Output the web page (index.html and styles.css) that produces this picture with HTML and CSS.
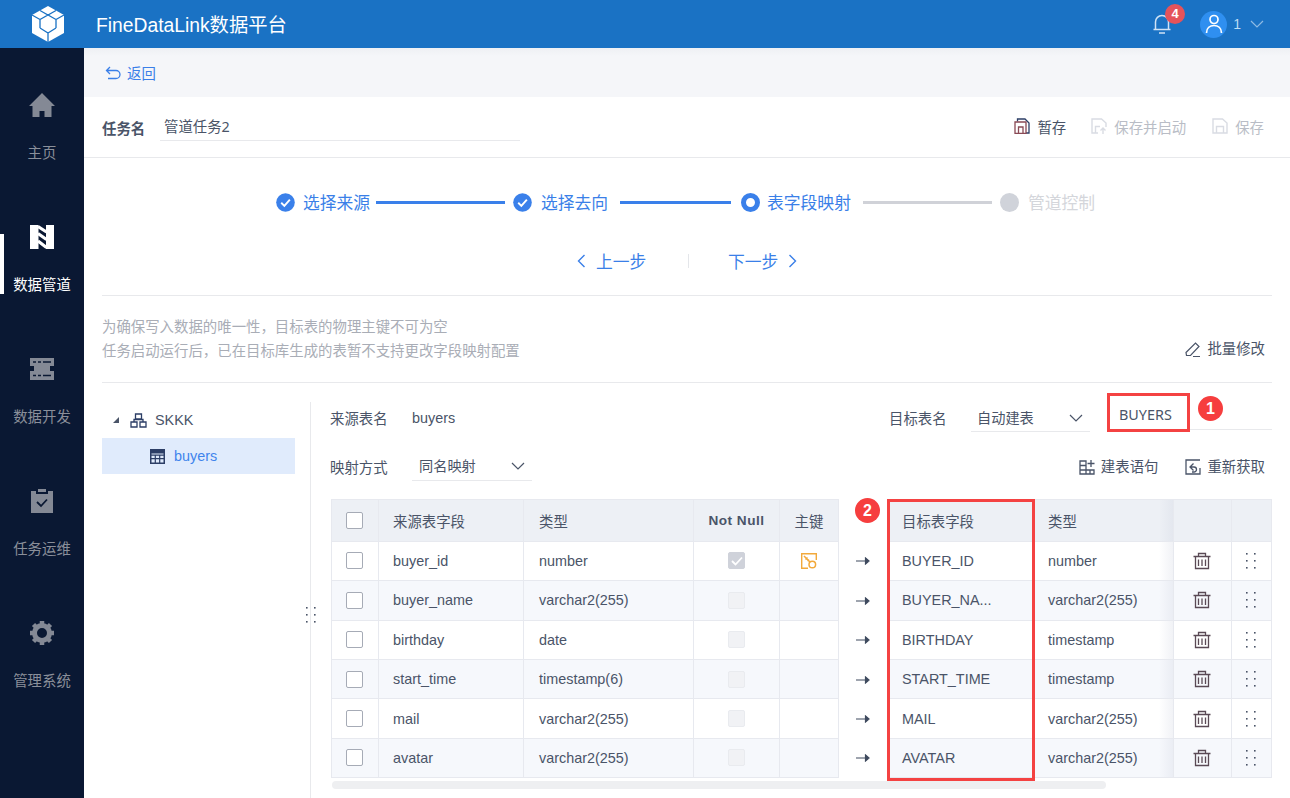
FILE: index.html
```html
<!DOCTYPE html>
<html lang="zh">
<head>
<meta charset="utf-8">
<title>FineDataLink数据平台</title>
<link rel="stylesheet" href="styles.css">
</head>
<body>
<svg class="defs" width="0" height="0" aria-hidden="true">
  <symbol id="i-trash" viewBox="0 0 18 18"><path d="M.5 4.500h17M5.500 4.500V1.500h7v3M2.500 4.500v12h13v-12M5.500 7.500v6.500M9 7.500v6.500M12.500 7.500v6.500M2.500 16.500h13" fill="none" stroke="currentColor" stroke-width="1.300"/></symbol>
  <symbol id="i-dots" viewBox="0 0 12 18"><g fill="currentColor"><rect x="1" y="1" width="1.600" height="1.600"/><rect x="9" y="1" width="1.600" height="1.600"/><rect x="1" y="8" width="1.600" height="1.600"/><rect x="9" y="8" width="1.600" height="1.600"/><rect x="1" y="15" width="1.600" height="1.600"/><rect x="9" y="15" width="1.600" height="1.600"/></g></symbol>
  <symbol id="i-arrow" viewBox="0 0 14 8"><path d="M0 4h12M9.500 1 13 4 9.500 7z" fill="currentColor" stroke="currentColor" stroke-width="1.200"/></symbol>
  <symbol id="i-check" viewBox="0 0 20 20"><circle cx="10" cy="10" r="9.800" fill="currentColor"/><path d="M5.500 10.300 8.800 13.600 14.600 7" fill="none" stroke="#fff" stroke-width="2"/></symbol>
  <symbol id="i-chev" viewBox="0 0 14 8"><path d="M1 1l6 6 6-6" fill="none" stroke="currentColor" stroke-width="1.200"/></symbol>
</svg>

<header class="topbar">
  <div class="logo-wrap">
    <svg class="logo" width="34" height="38" viewBox="0 0 34 38">
      <path d="M17 1l16 9v18l-16 9-16-9V10z" fill="#fff"/>
      <path d="M9 5.500l8 4.500 8-4.500M9 14.500 17 10l8 4.500M9 14.500V23M25 14.500V23M9 23l8 5 8-5M1 10l8 4.500M33 10l-8 4.500M17 28v9" fill="none" stroke="#1a72c4" stroke-width="1.300"/>
    </svg>
  </div>
  <div class="brand">FineDataLink数据平台</div>
  <div class="top-right">
    <div class="bell">
      <svg width="20" height="22" viewBox="0 0 20 22"><path d="M3.500 16V9a6.500 6.500 0 0 1 13 0v7M1.500 16.500h17M7 20h6" fill="none" stroke="#cfe2f5" stroke-width="1.500"/></svg>
      <span class="badge">4</span>
    </div>
    <div class="avatar">
      <svg width="18" height="20" viewBox="0 0 18 20"><circle cx="9" cy="5.500" r="4" fill="none" stroke="#fff" stroke-width="1.700"/><path d="M1.500 19c0-5 3.500-7.500 7.500-7.500s7.500 2.500 7.500 7.500" fill="none" stroke="#fff" stroke-width="1.700"/></svg>
    </div>
    <span class="user">1</span>
    <svg class="user-chev" width="14" height="8"><use href="#i-chev"/></svg>
  </div>
</header>

<div class="shell">
  <nav class="sidebar">
    <a class="nav-item">
      <svg width="26" height="26" viewBox="0 0 26 26"><path d="M13 1 26 14h-3.500v11H15.500v-6h-5v6H3.500V14H0z" fill="currentColor"/></svg>
      <span>主页</span>
    </a>
    <a class="nav-item active">
      <svg width="26" height="26" viewBox="0 0 26 26"><path d="M1 1h8.500v24H1zM17 1h8v24h-8z" fill="#fff"/><path d="M9 2.500l8.500 5.500M9 9.500l8.500 6M9 17l8.500 6.500" fill="none" stroke="#fff" stroke-width="3.200"/></svg>
      <span>数据管道</span>
    </a>
    <a class="nav-item">
      <svg width="26" height="26" viewBox="0 0 26 24"><path d="M1 1h24v8H1zM5 9h16v5H5zM1 14h24v9H1z" fill="currentColor"/><path d="M4 5h3M9 5h3M14 5h8M4 18.500h3M9 18.500h3M14 18.500h8M1 11.500h3M22 11.500h3" stroke="#0a1833" stroke-width="1.300"/></svg>
      <span>数据开发</span>
    </a>
    <a class="nav-item">
      <svg width="26" height="26" viewBox="0 0 24 26"><path d="M1 3h5v3h12V3h5v22H1zM8 1h8v3H8z" fill="currentColor"/><path d="M7 14l4 4 6-6.500" fill="none" stroke="#0a1833" stroke-width="1.800"/></svg>
      <span>任务运维</span>
    </a>
    <a class="nav-item">
      <svg width="26" height="26" viewBox="0 0 26 26"><circle cx="13" cy="13" r="7.500" fill="none" stroke="currentColor" stroke-width="5"/><path d="M13 1v4M13 21v4M1 13h4M21 13h4M4.500 4.500l3 3M18.500 18.500l3 3M21.500 4.500l-3 3M7.500 18.500l-3 3" stroke="currentColor" stroke-width="4.500"/></svg>
      <span>管理系统</span>
    </a>
  </nav>

  <main class="main">
    <div class="backbar">
      <svg width="16" height="14" viewBox="0 0 16 14"><path d="M5 1 1.500 4.500 5 8M1.500 4.500H11a3.800 3.800 0 0 1 0 8H3" fill="none" stroke="#3a7fe8" stroke-width="1.300"/></svg>
      <span>返回</span>
    </div>

    <div class="taskrow">
      <label class="task-label">任务名</label>
      <div class="task-input">管道任务2</div>
      <div class="actions">
        <span class="action"><svg width="16" height="16" viewBox="0 0 16 16"><path d="M3.500 3.500V1H11l4 4v10h-3" fill="none" stroke="#2c3e66" stroke-width="1.300"/><path d="M1 4h11v11.300H1zM4.500 15V9h4.500v6" fill="none" stroke="#8a4a55" stroke-width="1.300"/></svg>暂存</span>
        <span class="action off start"><svg width="16" height="16" viewBox="0 0 16 16"><path d="M7 15H1V1h9.500L15 5v4M4.500 15V8.500H9" fill="none" stroke="currentColor" stroke-width="1.400"/><path d="M12 16v-5.500M9.500 12.500l2.500-2.500 2.500 2.500" fill="none" stroke="currentColor" stroke-width="1.400"/></svg>保存并启动</span>
        <span class="action off last"><svg width="16" height="16" viewBox="0 0 16 16"><path d="M1 15V1h9.500L15 5v10zM4.500 15V8.500h7V15" fill="none" stroke="currentColor" stroke-width="1.400"/></svg>保存</span>
      </div>
    </div>

    <div class="content">
      <div class="steps">
        <svg class="dot" width="19" height="19"><use href="#i-check"/></svg>
        <span class="step-text st1">选择来源</span>
        <i class="line l1"></i>
        <svg class="dot d2" width="19" height="19"><use href="#i-check"/></svg>
        <span class="step-text st2">选择去向</span>
        <i class="line l2"></i>
        <span class="dot-now"></span>
        <span class="step-text st3">表字段映射</span>
        <i class="line l3"></i>
        <span class="dot-off"></span>
        <span class="step-text st4">管道控制</span>
      </div>

      <div class="pager">
        <span class="page-btn"><svg width="9" height="14" viewBox="0 0 9 14"><path d="M7.500 1 1.500 7l6 6" fill="none" stroke="currentColor" stroke-width="1.400"/></svg>上一步</span>
        <i class="page-sep"></i>
        <span class="page-btn"><span>下一步</span><svg width="9" height="14" viewBox="0 0 9 14"><path d="M1.500 1l6 6-6 6" fill="none" stroke="currentColor" stroke-width="1.400"/></svg></span>
      </div>

      <div class="hints">
        <div class="hint-text">
          <p>为确保写入数据的唯一性，目标表的物理主键不可为空</p>
          <p>任务启动运行后，已在目标库生成的表暂不支持更改字段映射配置</p>
        </div>
        <span class="tool"><svg width="16" height="16" viewBox="0 0 16 16"><path d="M1 11.500 10.500 2 14 5.500 5.500 14.500H1.500zM8 15.500h7" fill="none" stroke="#4a5468" stroke-width="1.200"/></svg>批量修改</span>
      </div>

      <div class="workspace">
        <aside class="tree">
          <div class="tree-root">
            <i class="caret"></i>
            <svg width="17" height="15" viewBox="0 0 17 15"><path d="M5.500 1h6v5h-6zM1 9h6v5H1zM10 9h6v5h-6zM4 9V6.500h9V9" fill="none" stroke="#2c3e66" stroke-width="1.300"/></svg>
            <span>SKKK</span>
          </div>
          <div class="tree-leaf">
            <svg width="15" height="15" viewBox="0 0 15 15"><path d="M0 0h15v15H0z" fill="#2c3e66"/><path d="M1.500 4.500h12v1h-12zM1.500 6.800h3.200v2.200H1.500zM5.900 6.800h3.200v2.200H5.900zM10.300 6.800h3.200v2.200h-3.200zM1.500 10.300h3.200v3.200H1.500zM5.900 10.300h3.200v3.200H5.900zM10.300 10.300h3.200v3.200h-3.200z" fill="#e0ebfc"/></svg>
            <span>buyers</span>
          </div>
          <svg class="resize" width="12" height="18"><use href="#i-dots"/></svg>
        </aside>

        <section class="mapping">
          <div class="form-row first">
            <span class="f-label">来源表名</span>
            <span class="f-value">buyers</span>
            <span class="f-label target">目标表名</span>
            <div class="select sel-target"><span>自动建表</span><svg width="14" height="8"><use href="#i-chev"/></svg></div>
            <div class="name-input">BUYERS</div>
            <span class="red-box"></span>
            <span class="mark mark1">1</span>
          </div>
          <div class="form-row second">
            <span class="f-label">映射方式</span>
            <div class="select sel-map"><span>同名映射</span><svg width="14" height="8"><use href="#i-chev"/></svg></div>
            <span class="tool push"><svg width="16" height="16" viewBox="0 0 16 16"><path d="M1 2h6v13H1zM1 6.500h6M1 11h6M7 11h8v4H7zM11 11v4M12 1v7M8.500 4.500h7" fill="none" stroke="#4a5468" stroke-width="1.300"/></svg>建表语句</span>
            <span class="tool gap"><svg width="16" height="16" viewBox="0 0 16 16"><path d="M15 1H1v14h14V9M8.500 4.500 5 8l3.500 3.500M5 8h4a2.500 2.500 0 0 1 0 5H7" fill="none" stroke="#4a5468" stroke-width="1.300"/></svg>重新获取</span>
          </div>

          <div class="table">
            <div class="row head">
              <div class="c c-ck"><i class="ck"></i></div>
              <div class="c">来源表字段</div>
              <div class="c">类型</div>
              <div class="c c-mid notnull">Not Null</div>
              <div class="c c-mid">主键</div>
              <div class="c c-arrow"></div>
              <div class="c">目标表字段</div>
              <div class="c c-shade">类型</div>
              <div class="c"></div>
              <div class="c c-last"></div>
            </div>

            <div class="row">
              <div class="c c-ck"><i class="ck"></i></div>
              <div class="c">buyer_id</div><div class="c">number</div>
              <div class="c c-mid"><i class="nn nn-on"><svg width="12" height="10" viewBox="0 0 12 10"><path d="M1 5l3.500 3.500L11 1.500" fill="none" stroke="#fff" stroke-width="1.800"/></svg></i></div>
              <div class="c c-mid"><svg width="16" height="16" viewBox="0 0 16 16"><path d="M15.300 7V.7H.7v14.600H7" fill="none" stroke="#f2a93b" stroke-width="1.400"/><circle cx="11.300" cy="11.500" r="3.300" fill="none" stroke="#f2a93b" stroke-width="1.500"/><path d="M3 3l6 6M4.500 6.500l2-2M6.500 8l1.500-1.500" fill="none" stroke="#f2a93b" stroke-width="1.500"/></svg></div>
              <div class="c c-arrow"><svg width="14" height="8"><use href="#i-arrow"/></svg></div>
              <div class="c">BUYER_ID</div><div class="c c-shade">number</div>
              <div class="c c-mid c-op"><svg width="18" height="18"><use href="#i-trash"/></svg></div>
              <div class="c c-mid c-op c-last"><svg class="drag" width="12" height="18"><use href="#i-dots"/></svg></div>
            </div>

            <div class="row alt">
              <div class="c c-ck"><i class="ck"></i></div>
              <div class="c">buyer_name</div><div class="c">varchar2(255)</div>
              <div class="c c-mid"><i class="nn"></i></div><div class="c c-mid"></div>
              <div class="c c-arrow"><svg width="14" height="8"><use href="#i-arrow"/></svg></div>
              <div class="c">BUYER_NA...</div><div class="c c-shade">varchar2(255)</div>
              <div class="c c-mid c-op"><svg width="18" height="18"><use href="#i-trash"/></svg></div>
              <div class="c c-mid c-op c-last"><svg class="drag" width="12" height="18"><use href="#i-dots"/></svg></div>
            </div>

            <div class="row">
              <div class="c c-ck"><i class="ck"></i></div>
              <div class="c">birthday</div><div class="c">date</div>
              <div class="c c-mid"><i class="nn"></i></div><div class="c c-mid"></div>
              <div class="c c-arrow"><svg width="14" height="8"><use href="#i-arrow"/></svg></div>
              <div class="c">BIRTHDAY</div><div class="c c-shade">timestamp</div>
              <div class="c c-mid c-op"><svg width="18" height="18"><use href="#i-trash"/></svg></div>
              <div class="c c-mid c-op c-last"><svg class="drag" width="12" height="18"><use href="#i-dots"/></svg></div>
            </div>

            <div class="row alt">
              <div class="c c-ck"><i class="ck"></i></div>
              <div class="c">start_time</div><div class="c">timestamp(6)</div>
              <div class="c c-mid"><i class="nn"></i></div><div class="c c-mid"></div>
              <div class="c c-arrow"><svg width="14" height="8"><use href="#i-arrow"/></svg></div>
              <div class="c">START_TIME</div><div class="c c-shade">timestamp</div>
              <div class="c c-mid c-op"><svg width="18" height="18"><use href="#i-trash"/></svg></div>
              <div class="c c-mid c-op c-last"><svg class="drag" width="12" height="18"><use href="#i-dots"/></svg></div>
            </div>

            <div class="row">
              <div class="c c-ck"><i class="ck"></i></div>
              <div class="c">mail</div><div class="c">varchar2(255)</div>
              <div class="c c-mid"><i class="nn"></i></div><div class="c c-mid"></div>
              <div class="c c-arrow"><svg width="14" height="8"><use href="#i-arrow"/></svg></div>
              <div class="c">MAIL</div><div class="c c-shade">varchar2(255)</div>
              <div class="c c-mid c-op"><svg width="18" height="18"><use href="#i-trash"/></svg></div>
              <div class="c c-mid c-op c-last"><svg class="drag" width="12" height="18"><use href="#i-dots"/></svg></div>
            </div>

            <div class="row alt">
              <div class="c c-ck"><i class="ck"></i></div>
              <div class="c">avatar</div><div class="c">varchar2(255)</div>
              <div class="c c-mid"><i class="nn"></i></div><div class="c c-mid"></div>
              <div class="c c-arrow"><svg width="14" height="8"><use href="#i-arrow"/></svg></div>
              <div class="c">AVATAR</div><div class="c c-shade">varchar2(255)</div>
              <div class="c c-mid c-op"><svg width="18" height="18"><use href="#i-trash"/></svg></div>
              <div class="c c-mid c-op c-last"><svg class="drag" width="12" height="18"><use href="#i-dots"/></svg></div>
            </div>

            <span class="col-box"></span>
            <span class="mark mark2">2</span>
          </div>
          <div class="hscroll"><i></i></div>
        </section>
      </div>
    </div>
  </main>
</div>
</body>
</html>
```

FILE: styles.css
```css
* { box-sizing: border-box; }
html, body { margin: 0; height: 100%; }
body {
  width: 1290px;
  height: 798px;
  overflow: hidden;
  display: flex;
  flex-direction: column;
  font-family: "Liberation Sans", "Noto Sans CJK SC", sans-serif;
  font-size: 14.4px;
  color: #4a5468;
  background: #fff;
}
p { margin: 0; }
i { display: block; font-style: normal; }
svg { display: block; flex: none; }
.defs { position: absolute; }

/* top bar */
.topbar {
  height: 48px;
  flex: none;
  display: flex;
  align-items: center;
  background: #1a72c4;
  color: #fff;
}
.logo-wrap { width: 96px; padding-left: 31px; }
.brand { font-size: 19.3px; }
.top-right { margin-left: auto; display: flex; align-items: center; padding-right: 26px; }
.bell { position: relative; margin-right: 28px; }
.badge {
  position: absolute;
  left: 13px;
  top: -9px;
  width: 20px;
  height: 20px;
  border-radius: 50%;
  background: #e5535b;
  color: #fff;
  font-size: 13px;
  font-weight: 700;
  line-height: 20px;
  text-align: center;
}
.avatar {
  width: 27px;
  height: 27px;
  border-radius: 50%;
  background: #2f8ff0;
  display: flex;
  align-items: center;
  justify-content: center;
}
.user { margin-left: 6px; color: #bcdcf5; font-size: 14px; }
.user-chev { margin-left: 9px; color: #8fbbe4; }

/* layout */
.shell { flex: 1; display: flex; min-height: 0; }
.sidebar { width: 84px; flex: none; background: #0a1833; padding-top: 15px; }
.nav-item {
  position: relative;
  height: 132px;
  display: flex;
  flex-direction: column;
  align-items: center;
  padding-top: 29px;
  color: #848995;
}
.nav-item span { margin-top: 26px; font-size: 14.4px; line-height: 18px; color: #8a8f9a; }
.nav-item.active span { color: #fff; }
.nav-item.active::before {
  content: "";
  position: absolute;
  left: 0;
  top: 39px;
  width: 4px;
  height: 60px;
  background: #fff;
}
.main { flex: 1; min-width: 0; display: flex; flex-direction: column; overflow: hidden; }

.backbar {
  height: 49px;
  flex: none;
  display: flex;
  align-items: center;
  gap: 6px;
  padding-left: 21px;
  background: linear-gradient(#eef0f4, #f5f6f9 8px);
  color: #3a7fe8;
  font-size: 14.4px;
}

.taskrow {
  height: 61px;
  flex: none;
  display: flex;
  align-items: center;
  padding: 0 26px 0 18px;
  border-bottom: 1px solid #e8e9ec;
}
.task-label { font-weight: 700; color: #4a5468; width: 58px; font-size: 14.4px; }
.task-input {
  width: 360px;
  height: 28px;
  padding: 1px 0 0 4px;
  font-family: "Noto Sans", "Noto Sans CJK SC", sans-serif;
  line-height: 26px;
  border-bottom: 1px solid #e8e9ec;
}
.actions { margin-left: auto; margin-bottom: 2px; display: flex; align-items: center; }
.action { display: flex; align-items: center; gap: 7px; }
.action.off { color: #b9bdc6; margin-left: 25px; }
.action.off.last { margin-left: 26px; }
.action.off svg { color: #d9dce3; }

.content { flex: 1; min-height: 0; display: flex; flex-direction: column; padding: 0 18px; }

/* stepper */
.steps { height: 88px; flex: none; display: flex; align-items: center; padding-left: 174px; color: #3a7fe8; }
.dot { color: #3a80ea; }
.step-text { font-size: 16.8px; white-space: nowrap; }
.st1 { margin-left: 8px; width: 67px; }
.st2 { margin-left: 9px; width: 67px; }
.st3 { margin-left: 7px; width: 85px; }
.st4 { margin-left: 9px; width: 67px; color: #d4d6db; }
.line { height: 3px; background: #3a80ea; }
.l1 { width: 129px; margin-left: 6px; }
.d2 { margin-left: 8px; }
.l2 { width: 111px; margin-left: 12px; }
.l3 { width: 129px; margin-left: 11px; background: #d0d2d8; }
.dot-now { width: 19px; height: 19px; margin-left: 10px; border-radius: 50%; border: 5px solid #3a80ea; background: #fff; }
.dot-off { width: 19px; height: 19px; margin-left: 8px; border-radius: 50%; background: #d0d3da; }

.pager { height: 30px; flex: none; margin-bottom: 19px; display: flex; align-items: center; padding-left: 475px; color: #3a7fe8; font-size: 16.8px; }
.page-btn { display: flex; align-items: center; gap: 10px; width: 69px; white-space: nowrap; }
.page-sep { width: 1px; height: 14px; background: #e4e6ea; margin-left: 42px; margin-right: 39px; }

.hints {
  flex: none;
  display: flex;
  justify-content: space-between;
  align-items: flex-end;
  padding: 19px 7px 19px 0;
  border-top: 1px solid #e8e9ec;
  border-bottom: 1px solid #e8e9ec;
}
.hint-text { color: #a9adb6; line-height: 24px; font-size: 14.42px; }
.tool { display: flex; align-items: center; gap: 6px; line-height: 24px; white-space: nowrap; }
.hints .tool { margin-bottom: 2px; }

/* workspace */
.workspace { flex: 1; min-height: 0; display: flex; }
.tree {
  position: relative;
  width: 209px;
  flex: none;
  margin-top: 19px;
  border-right: 1px solid #e8e9ec;
}
.tree-root { height: 36px; display: flex; align-items: center; padding-left: 11px; }
.caret { width: 0; height: 0; border-style: solid; border-width: 0 0 6px 6px; border-color: transparent transparent #4a5468 transparent; margin-right: 11px; }
.tree-root svg { margin-right: 8px; }
.tree-leaf {
  width: 193px;
  height: 36px;
  display: flex;
  align-items: center;
  gap: 9px;
  padding-left: 48px;
  background: #e0ebfc;
  color: #3f84ec;
}
.resize { position: absolute; right: -7px; top: 204px; color: #4a5468; }

.mapping { flex: 1; min-width: 0; padding-left: 20px; }
.form-row { height: 36px; display: flex; align-items: center; position: relative; }
.first { margin-top: 17px; }
.second { margin-top: 13px; }
.f-label { width: 81px; flex: none; color: #4a5468; font-size: 14.4px; margin: 0 0 2px -1px; padding-right: 1px; }
.f-value { width: 477px; flex: none; margin-left: 1px; }
.f-label.target { width: 82px; margin-left: 0; }
.select {
  display: flex;
  align-items: center;
  justify-content: space-between;
  height: 28px;
  padding: 0 7px 0 6px;
  border-bottom: 1px solid #e8e9ec;
  font-size: 14.2px;
}
.select span { margin-bottom: 2px; }
.select svg { color: #4a5468; }
.sel-target { width: 119px; }
.sel-map { width: 120px; margin-top: -1px; margin-left: 1px; padding-left: 7px; }
.name-input {
  width: 164px;
  height: 30px;
  margin-left: 18px;
  margin-top: -6px;
  padding-left: 11px;
  font-family: "Noto Sans", sans-serif;
  line-height: 30px;
  font-size: 14.4px;
  border-bottom: 1px solid #e8e9ec;
}
.red-box {
  position: absolute;
  left: 776px;
  top: -7px;
  width: 83px;
  height: 39px;
  border: 3.5px solid #f44242;
}
.mark {
  position: absolute;
  width: 25px;
  height: 25px;
  border-radius: 50%;
  background: #f63e3e;
  color: #fff;
  font-size: 16px;
  font-weight: 700;
  line-height: 25px;
  text-align: center;
}
.mark1 { left: 867px; top: -4px; }
.mark2 { left: 524px; top: -1px; }
.push { margin-left: auto; }
.tool.gap { margin-left: 27px; margin-right: 7px; }

/* table */
.table { position: relative; margin-top: 14px; }
.row {
  display: grid;
  grid-template-columns: 48px 145px 170px 86px 59px 49px 146px 140px 58px 40px;
  height: 39.4px;
}
.row.head { height: 42.8px; }
.c {
  display: flex;
  align-items: center;
  padding-left: 14px;
  border-right: 1px solid #e7e9ef;
  border-bottom: 1px solid #e7e9ef;
  white-space: nowrap;
  overflow: hidden;
  color: #4a5468;
}
.c:nth-child(3) { padding-left: 15px; }
.head .c { background: #edf0f5; border-top: 1px solid #e7e9ef; font-size: 14.4px; }
.head .notnull { font-weight: 700; letter-spacing: .5px; font-size: 13.6px; }
.alt .c { background: #f6f8fc; }
.c-ck { padding-left: 0; justify-content: center; box-shadow: inset 1px 0 0 #e7e9ef; }
.c-mid { padding-left: 0; justify-content: center; }
.head .c-arrow, .alt .c-arrow, .c-arrow { background: #fff; border: 0; padding-left: 17px; color: #3e4a5e; }
.c-shade { position: relative; overflow: visible; }
.c-shade::after {
  content: "";
  position: absolute;
  right: 0;
  top: 0;
  bottom: 0;
  width: 14px;
  background: linear-gradient(90deg, rgba(200, 205, 220, 0), rgba(200, 205, 220, .25));
}
.c-op { color: #5a4a55; padding-right: 1px; }
.drag { color: #4a5468; }
.ck { width: 17px; height: 17px; border: 1px solid #a6abb6; border-radius: 2px; background: #fff; }
.nn { width: 17px; height: 17px; border-radius: 2px; background: #f1f2f5; border: 1px solid #e9ebef; display: flex; align-items: center; justify-content: center; }
.nn-on { background: #cfd2da; border-color: #cfd2da; }
.col-box {
  position: absolute;
  left: 556px;
  top: 0;
  width: 148px;
  height: 282px;
  border: 3.5px solid #f44242;
}
.hscroll { margin-top: 3px; padding-left: 1px; }
.hscroll i { width: 774px; height: 8px; border-radius: 4px; background: #eeeff1; }
```
